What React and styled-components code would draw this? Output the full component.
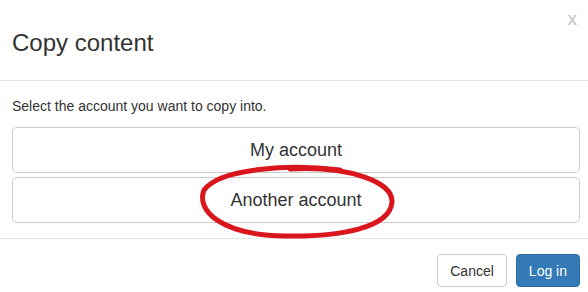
import React from "react";
import styled, { createGlobalStyle } from "styled-components";

const Global = createGlobalStyle`
  html, body { margin: 0; padding: 0; background: #fff; }
  body { font-family: "Liberation Sans", Arial, sans-serif; color: #333; }
`;

const Modal = styled.div`
  width: 588px;
  height: 292px;
  background: #fff;
  position: relative;
  overflow: hidden;
`;

const Header = styled.div`
  height: 81px;
  box-sizing: border-box;
  border-bottom: 1px solid #e5e5e5;
  padding: 6px 8px 0 12px;
  display: flex;
  align-items: center;
  position: relative;
`;

const Title = styled.h4`
  margin: 0;
  font-size: 24px;
  font-weight: 400;
  color: #333;
  line-height: 1.1;
`;

const Close = styled.button`
  position: absolute;
  top: 9px;
  right: 11px;
  border: 0;
  background: transparent;
  padding: 0;
  font-family: "Liberation Sans", Arial, sans-serif;
  font-size: 19px;
  line-height: 20px;
  color: #c4c4c4;
  cursor: pointer;
`;

const Body = styled.div`
  padding: 15px 8px 15px 12px;
  border-bottom: 1px solid #e5e5e5;
`;

const Prompt = styled.p`
  margin: 0 0 11px;
  font-size: 14px;
  line-height: 20px;
  color: #333;
`;

const Choices = styled.div`
  display: flex;
  flex-direction: column;
  gap: 4px;
`;

const Choice = styled.button`
  height: 46px;
  border: 1px solid #ccc;
  border-radius: 5px;
  background: #fff;
  font-family: "Liberation Sans", Arial, sans-serif;
  font-size: 18px;
  color: #333;
  cursor: pointer;
`;

const Footer = styled.div`
  display: flex;
  justify-content: flex-end;
  gap: 9px;
  padding: 15px 8px 0 12px;
`;

const Btn = styled.button`
  height: 33px;
  padding: 0 12px;
  border-radius: 4px;
  font-family: "Liberation Sans", Arial, sans-serif;
  font-size: 14px;
  cursor: pointer;
  border: 1px solid ${(p) => (p.$primary ? "#2e6da4" : "#ccc")};
  background: ${(p) => (p.$primary ? "#337ab7" : "#fff")};
  color: ${(p) => (p.$primary ? "#fff" : "#333")};
`;

const Ring = styled.svg`
  position: absolute;
  left: 190px;
  top: 158px;
  pointer-events: none;
`;

export default function App() {
  return (
    <>
      <Global />
      <Modal>
        <Header>
          <Title>Copy content</Title>
          <Close>x</Close>
        </Header>
        <Body>
          <Prompt>Select the account you want to copy into.</Prompt>
          <Choices>
            <Choice>My account</Choice>
            <Choice>Another account</Choice>
          </Choices>
        </Body>
        <Footer>
          <Btn>Cancel</Btn>
          <Btn $primary>Log in</Btn>
        </Footer>
        <Ring width="220" height="90" viewBox="0 0 220 90">
          <path
            d="M150 12 C 100 6, 30 10, 14 32 C 6 52, 30 77, 95 78 C 150 79, 200 70, 202 44 C 203 24, 160 8, 100 11"
            fill="none"
            stroke="#d9161c"
            strokeWidth="5"
            strokeLinecap="round"
          />
        </Ring>
      </Modal>
    </>
  );
}
